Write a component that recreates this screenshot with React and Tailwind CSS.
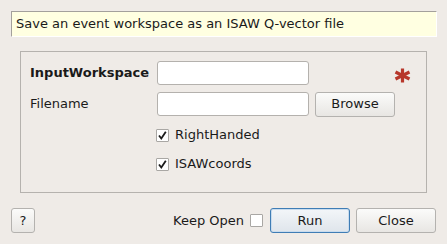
import React from "react";

function Check({ checked }) {
  return (
    <div className="w-[13px] h-[13px] border border-[#a9a7a4] bg-white rounded-[1px] flex items-center justify-center">
      {checked && (
        <svg width="11" height="11" viewBox="0 0 11 11">
          <path d="M2 5.5 L4.3 8.5 L8.8 1.8" fill="none" stroke="#1a1a1a" strokeWidth="1.8" strokeLinecap="butt" strokeLinejoin="miter" />
        </svg>
      )}
    </div>
  );
}

function Btn({ children, className = "", def = false }) {
  return (
    <div
      className={
        "h-[25px] flex items-center justify-center rounded-[3px] border " +
        (def
          ? "border-[#3f7db5] bg-gradient-to-b from-[#f3f6f9] to-[#dfe5eb] shadow-[inset_0_0_0_1px_#c9dcee]"
          : "border-[#b4b2af] bg-gradient-to-b from-[#fbfbfa] to-[#e8e6e3]") +
        " " +
        className
      }
    >
      {children}
    </div>
  );
}

export default function App() {
  return (
    <div
      className="w-[447px] h-[244px] bg-[#efebe7] text-[#1a1a1a] text-[13px] flex flex-col overflow-hidden"
      style={{ fontFamily: '"DejaVu Sans", sans-serif' }}
    >
      <div className="mt-[11px] ml-[11px] w-[426px] h-[26px] bg-[#ffffe1] border-t border-l border-t-[#a3a09c] border-l-[#a3a09c] border-r border-b border-r-white border-b-white flex items-center pl-[4px]">
        Save an event workspace as an ISAW Q-vector file
      </div>

      <div className="mt-[14px] ml-[20px] w-[407px] h-[142px] border border-[#b5b2ae] flex flex-col pl-[9px] pt-[9px]">
        <div className="flex items-center h-[24px]">
          <div className="w-[127px] font-bold">InputWorkspace</div>
          <div className="w-[152px] h-[24px] bg-white border border-[#b4b1ad] rounded-[3px]" />
          <div className="w-[85px]" />
          <div className="w-[17px] h-[16px] flex items-center justify-center mt-[4px]">
            <svg width="17" height="15" viewBox="0 0 17 15">
              <g stroke="#b7372b" strokeWidth="3.2" strokeLinecap="butt">
                <line x1="8.5" y1="0.5" x2="8.5" y2="14.5" />
                <line x1="1.5" y1="4" x2="15.5" y2="11" />
                <line x1="1.5" y1="11" x2="15.5" y2="4" />
              </g>
            </svg>
          </div>
        </div>
        <div className="flex items-center h-[24px] mt-[7px]">
          <div className="w-[127px]">Filename</div>
          <div className="w-[152px] h-[24px] bg-white border border-[#b4b1ad] rounded-[3px]" />
          <div className="w-[6px]" />
          <Btn className="w-[80px] h-[24px]">Browse</Btn>
        </div>
        <div className="flex items-center h-[14px] mt-[12px] pl-[126px]">
          <Check checked />
          <span className="ml-[6px]">RightHanded</span>
        </div>
        <div className="flex items-center h-[14px] mt-[15px] pl-[126px]">
          <Check checked />
          <span className="ml-[6px]">ISAWcoords</span>
        </div>
      </div>

      <div className="mt-[15px] ml-[11px] w-[425px] flex items-center">
        <Btn className="w-[24px]">?</Btn>
        <div className="flex-1" />
        <span>Keep Open</span>
        <div className="ml-[6px]">
          <Check />
        </div>
        <Btn def className="ml-[7px] w-[80px]">Run</Btn>
        <Btn className="ml-[6px] w-[80px]">Close</Btn>
      </div>
    </div>
  );
}
